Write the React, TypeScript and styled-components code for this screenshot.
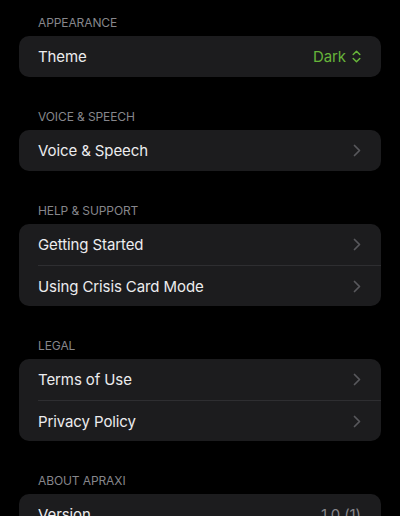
import React from "react";
import styled, { createGlobalStyle } from "styled-components";

const GlobalStyle = createGlobalStyle`
  html, body {
    margin: 0;
    padding: 0;
    background: #000;
  }
  body {
    font-family: Inter, "Noto Sans", "Liberation Sans", sans-serif;
    -webkit-font-smoothing: antialiased;
  }
`;

type RowItem = {
  label: string;
  value?: string;
  kind?: "link" | "select" | "info";
};

type SectionData = {
  title: string;
  rows: RowItem[];
};

const sections: SectionData[] = [
  { title: "Appearance", rows: [{ label: "Theme", value: "Dark", kind: "select" }] },
  { title: "Voice & Speech", rows: [{ label: "Voice & Speech" }] },
  {
    title: "Help & Support",
    rows: [{ label: "Getting Started" }, { label: "Using Crisis Card Mode" }],
  },
  { title: "Legal", rows: [{ label: "Terms of Use" }, { label: "Privacy Policy" }] },
  { title: "About Apraxi", rows: [{ label: "Version", value: "1.0 (1)", kind: "info" }] },
];

const ChevronRight = () => (
  <svg width="8" height="13" viewBox="0 0 8 13" fill="none">
    <path
      d="M1.5 1.5l5 5-5 5"
      stroke="#58585c"
      strokeWidth="1.7"
      strokeLinecap="round"
      strokeLinejoin="round"
    />
  </svg>
);

const UpDown = () => (
  <svg width="9" height="13" viewBox="0 0 9 13" fill="none">
    <path
      d="M1.2 4.5l3.3-3.3 3.3 3.3M1.2 8.5l3.3 3.3 3.3-3.3"
      stroke="#66b43a"
      strokeWidth="1.5"
      strokeLinecap="round"
      strokeLinejoin="round"
    />
  </svg>
);

const SettingsRow: React.FC<{ item: RowItem; first: boolean }> = ({ item, first }) => {
  const kind = item.kind ?? "link";
  return (
    <Row>
      <RowInner $first={first}>
        <Label>{item.label}</Label>
        <Trailing>
          {item.value && <Value $kind={kind}>{item.value}</Value>}
          {kind === "select" && <UpDown />}
          {kind === "link" && <ChevronRight />}
        </Trailing>
      </RowInner>
    </Row>
  );
};

const App: React.FC = () => (
  <Page>
    <GlobalStyle />
    {sections.map((section) => (
      <Section key={section.title}>
        <SectionTitle>{section.title}</SectionTitle>
        <Card>
          {section.rows.map((row, i) => (
            <SettingsRow key={row.label} item={row} first={i === 0} />
          ))}
        </Card>
      </Section>
    ))}
  </Page>
);

const Page = styled.div`
  display: flex;
  flex-direction: column;
  gap: 32px;
  padding: 15px 19px 0;
  background: #000;
  min-height: 516px;
  box-sizing: border-box;
`;

const Section = styled.section`
  display: flex;
  flex-direction: column;
  gap: 5px;
`;

const SectionTitle = styled.h3`
  margin: 0;
  padding-left: 19px;
  font-size: 12px;
  line-height: 16px;
  font-weight: 400;
  letter-spacing: -0.1px;
  text-transform: uppercase;
  color: #86868b;
`;

const Card = styled.div`
  background: #1c1c1e;
  border-radius: 10px;
  overflow: hidden;
`;

const Row = styled.div`
  padding-left: 19px;
`;

const RowInner = styled.div<{ $first: boolean }>`
  display: flex;
  align-items: center;
  justify-content: space-between;
  height: 41px;
  box-sizing: border-box;
  padding-right: 20px;
  border-top: ${({ $first }) => ($first ? "none" : "1px solid #2e2e31")};
`;

const Label = styled.span`
  font-size: 15px;
  letter-spacing: -0.1px;
  color: #ececee;
`;

const Trailing = styled.div`
  display: flex;
  align-items: center;
  gap: 6px;
`;

const Value = styled.span<{ $kind: string }>`
  font-size: 15px;
  letter-spacing: -0.1px;
  color: ${({ $kind }) => ($kind === "select" ? "#66b43a" : "#86868b")};
`;

export default App;
